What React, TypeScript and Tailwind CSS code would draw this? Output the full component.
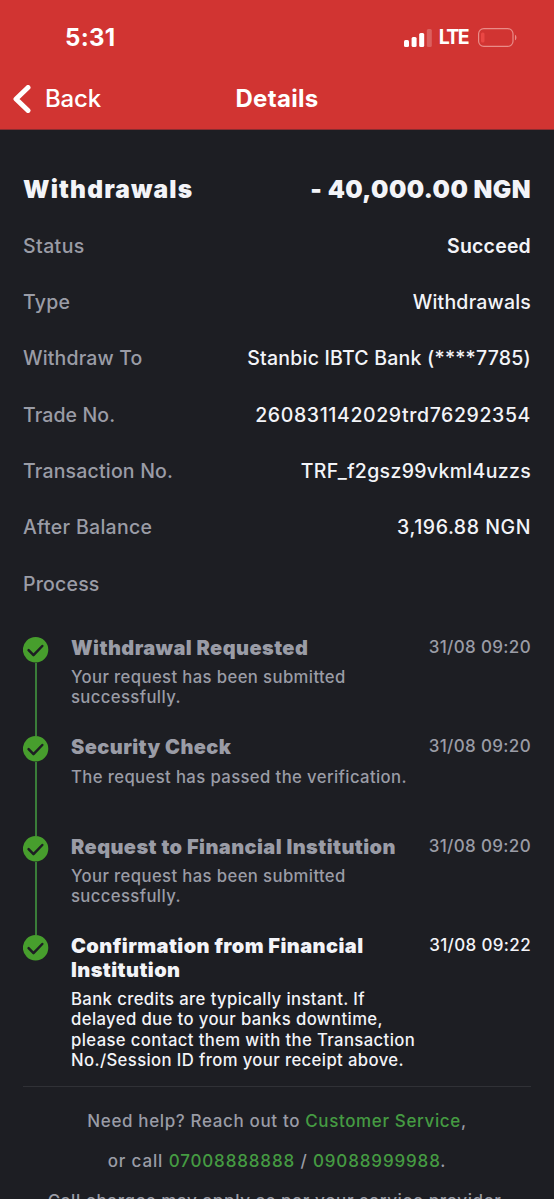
import type { ReactNode } from "react";

type Row = { label: string; value?: string; labelClass: string; valueClass?: string };

const rows: Row[] = [
  { label: "Status", value: "Succeed", labelClass: "tracking-[0.4px]", valueClass: "font-semibold tracking-[0.2px]" },
  { label: "Type", value: "Withdrawals", labelClass: "tracking-[0.2px]", valueClass: "font-medium tracking-[0.2px]" },
  { label: "Withdraw To", value: "Stanbic IBTC Bank (****7785)", labelClass: "tracking-[0.15px]", valueClass: "font-medium tracking-[0.22px]" },
  { label: "Trade No.", value: "260831142029trd76292354", labelClass: "tracking-[0.1px]", valueClass: "font-medium tracking-[0.6px]" },
  { label: "Transaction No.", value: "TRF_f2gsz99vkml4uzzs", labelClass: "tracking-[0.18px]", valueClass: "font-medium tracking-[0.32px]" },
  { label: "After Balance", value: "3,196.88 NGN", labelClass: "tracking-[0.3px]", valueClass: "font-medium tracking-[0.55px]" },
  { label: "Process", labelClass: "tracking-[0.2px]" },
];

type Step = { title: string[]; lines: string[]; time: string; active?: boolean };

const steps: Step[] = [
  { title: ["Withdrawal Requested"], lines: ["Your request has been submitted", "successfully."], time: "31/08 09:20" },
  { title: ["Security Check"], lines: ["The request has passed the verification."], time: "31/08 09:20" },
  { title: ["Request to Financial Institution"], lines: ["Your request has been submitted", "successfully."], time: "31/08 09:20" },
  {
    title: ["Confirmation from Financial", "Institution"],
    lines: [
      "Bank credits are typically instant. If",
      "delayed due to your banks downtime,",
      "please contact them with the Transaction",
      "No./Session ID from your receipt above.",
    ],
    time: "31/08 09:22",
    active: true,
  },
];

export default function App() {
  return (
    <div className="flex h-[1199px] w-[554px] flex-col overflow-hidden bg-[#1d1e23] font-['Inter',sans-serif] text-[#f3f4f8]">
      <Header />

      <main className="flex flex-col px-[23px] pt-[31px]">
        <div className="flex h-[57px] items-center justify-between text-[24.5px] font-black">
          <h2 className="tracking-[1.15px]">Withdrawals</h2>
          <p className="tracking-[0.42px]">- 40,000.00 NGN</p>
        </div>
        {rows.map((row) => (
          <div key={row.label} className="flex h-[56.35px] items-center justify-between whitespace-nowrap text-[19.5px]">
            <span className={`font-medium text-[#9a9ca6] ${row.labelClass}`}>{row.label}</span>
            {row.value && <span className={row.valueClass}>{row.value}</span>}
          </div>
        ))}

        {/* Timeline */}
        <div className="flex flex-col pt-[24.6px]">
          {steps.map((step, i) => (
            <TimelineStep key={i} step={step} last={i === steps.length - 1} />
          ))}
        </div>

        {/* Help */}
        <div className="flex flex-col items-center border-t border-[#303136] pt-[13.5px] text-[17px] leading-[40px] font-medium tracking-[0.63px] whitespace-nowrap text-[#9a9ca6]">
          <p>
            Need help? Reach out to <Green>Customer Service</Green>,
          </p>
          <p className="tracking-[0.86px]">
            or call <Green>07008888888</Green> / <Green>09088999988</Green>.
          </p>
          <p>Call charges may apply as per your service provider.</p>
        </div>
      </main>
    </div>
  );
}

function Header() {
  return (
    <header className="flex h-[130px] shrink-0 flex-col border-b border-[#8a2c30] bg-[#d13432] text-white">
      <div className="flex h-[67px] items-center justify-between pt-[8px] pr-[37px] pl-[65px]">
        <span className="text-[24px] font-bold tracking-[0.3px]">5:31</span>
        <div className="flex items-center">
          <SignalIcon />
          <span className="ml-[7px] text-[19.5px] font-bold tracking-[-1.6px]">LTE</span>
          <BatteryIcon />
        </div>
      </div>
      <div className="grid grid-cols-3 items-center pt-[13.5px] text-[24px] leading-[36px]">
        <div className="flex items-center pl-[13px]">
          <svg width="18" height="28" viewBox="0 0 18 28" fill="none">
            <path d="M15 2.5L3 14L15 25.5" stroke="currentColor" strokeWidth="5" strokeLinecap="round" strokeLinejoin="round" />
          </svg>
          <span className="ml-[14px] font-medium tracking-[-0.2px]">Back</span>
        </div>
        <h1 className="text-center font-bold tracking-[0.3px]">Details</h1>
      </div>
    </header>
  );
}

function SignalIcon() {
  return (
    <svg width="28" height="18" viewBox="0 0 28 18" fill="currentColor">
      <rect x="0" y="11" width="5" height="7" rx="1.5" />
      <rect x="7.6" y="8" width="5" height="10" rx="1.5" />
      <rect x="15.2" y="4" width="5" height="14" rx="1.5" />
      <rect x="22.8" y="0" width="5" height="18" rx="1.5" opacity="0.22" />
    </svg>
  );
}

function BatteryIcon() {
  return (
    <svg className="ml-[10px]" width="39" height="19" viewBox="0 0 39 19" fill="none">
      <rect x="0.6" y="0.6" width="34.4" height="17.8" rx="5.2" stroke="#e98c88" strokeWidth="1.2" />
      <rect x="3" y="4.5" width="3.5" height="10" rx="1.5" fill="#ea4744" />
      <path d="M37 6.7C38.9 7.5 38.9 11.5 37 12.3Z" fill="#e98c88" />
    </svg>
  );
}

function TimelineStep({ step, last }: { step: Step; last: boolean }) {
  return (
    <div className={`flex ${last ? "h-[151px]" : "h-[99.4px]"} ${step.active ? "text-[#f3f4f8]" : "text-[#9a9ca6]"}`}>
      <div className="flex w-[26px] flex-col items-center">
        <svg className="shrink-0" width="26" height="26" viewBox="0 0 26 26" fill="none">
          <circle cx="12.6" cy="12.8" r="12.7" fill="#479e2d" />
          <path d="M5.6 13.1L10.5 18.1L19.3 9" stroke="#1d1e23" strokeWidth="2.5" strokeLinecap="round" strokeLinejoin="round" />
        </svg>
        {!last && <div className="w-[2px] flex-1 bg-[#3a7d39]" />}
      </div>
      <div className="ml-[22px] flex-1 whitespace-nowrap">
        <h3 className="text-[20px] leading-[23.6px] font-black tracking-[0.42px]">
          {step.title.map((line) => (
            <span key={line} className="block">{line}</span>
          ))}
        </h3>
        <p className="pt-[6.6px] text-[16.7px] leading-[20.3px] font-medium tracking-[0.38px]">
          {step.lines.map((line) => (
            <span key={line} className="block">{line}</span>
          ))}
        </p>
      </div>
      <time className="text-[17px] leading-[21px] font-medium tracking-[0.35px] whitespace-nowrap">{step.time}</time>
    </div>
  );
}

function Green({ children }: { children: ReactNode }) {
  return <a className="text-[#459b42]">{children}</a>;
}
